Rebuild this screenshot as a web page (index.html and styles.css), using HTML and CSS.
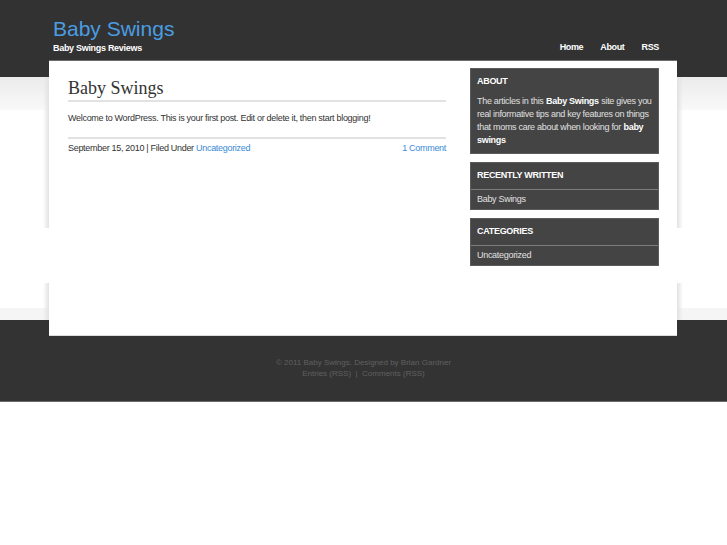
FILE: index.html
```html
<!DOCTYPE html>
<html lang="en">
<head>
<meta charset="utf-8">
<title>Baby Swings</title>
<link rel="stylesheet" href="styles.css">
</head>
<body>
<header class="header">
  <div class="header-inner">
    <div class="brand">
      <div class="site-title">Baby Swings</div>
      <div class="site-desc">Baby Swings Reviews</div>
    </div>
    <nav class="nav">
      <a href="#">Home</a>
      <a href="#">About</a>
      <a href="#">RSS</a>
    </nav>
  </div>
</header>
<div class="page">
  <div class="wrap">
    <main class="content">
      <h1 class="post-title">Baby Swings</h1>
      <p class="post-text">Welcome to WordPress. This is your first post. Edit or delete it, then start blogging!</p>
      <div class="post-meta">
        <span>September 15, 2010 | Filed Under <a href="#">Uncategorized</a></span>
        <a href="#">1 Comment</a>
      </div>
    </main>
    <aside class="sidebar">
      <section class="widget">
        <h2 class="widget-title">ABOUT</h2>
        <p class="widget-text">The articles in this<b>Baby Swings</b>site gives you real informative tips and key features on things that moms care about when looking for<b>baby swings</b></p>
      </section>
      <section class="widget">
        <h2 class="widget-title">RECENTLY WRITTEN</h2>
        <ul class="widget-list"><li>Baby Swings</li></ul>
      </section>
      <section class="widget">
        <h2 class="widget-title">CATEGORIES</h2>
        <ul class="widget-list"><li>Uncategorized</li></ul>
      </section>
    </aside>
  </div>
</div>
<footer class="footer">
  <p>© 2011 Baby Swings. Designed by Brian Gardner</p>
  <p>Entries (RSS) &nbsp;|&nbsp; Comments (RSS)</p>
</footer>
</body>
</html>
```
FILE: styles.css
```css
* { box-sizing: border-box; }
html, body { margin: 0; padding: 0; }
body {
  font-family: "Liberation Sans", Arial, sans-serif;
  color: #333;
  background:
    linear-gradient(#323232, #323232) 0 0 / 100% 77px no-repeat,
    linear-gradient(#ebebeb, #f2f2f2 50%, #f9f9f9) 0 77px / 100% 33px no-repeat,
    linear-gradient(#f5f5f5, #f5f5f5) 0 308px / 100% 12px no-repeat,
    #fff;
}
a { text-decoration: none; }

.header { height: 60px; }
.header-inner {
  width: 628px;
  margin-left: calc(50% - 314.5px);
  padding: 17px 18px 0 4px;
  display: flex;
  justify-content: space-between;
  align-items: flex-end;
}
.site-title {
  font-size: 21px;
  line-height: 24px;
  color: #4a9de2;
}
.site-desc {
  margin-top: 1px;
  font-size: 9px;
  line-height: 12px;
  font-weight: bold;
  color: #fff;
  letter-spacing: -0.3px;
}
.nav { display: flex; gap: 17px; margin-bottom: 1px; }
.nav a {
  font-size: 9px;
  line-height: 12px;
  font-weight: bold;
  color: #fff;
  letter-spacing: -0.35px;
}

.page {
  position: relative;
  z-index: 1;
  width: 640px;
  margin-left: calc(50% - 320.5px);
  padding: 0 6px;
  background:
    linear-gradient(to right, rgba(0,0,0,0), #e2e2e2) 0 17px / 6px 151px no-repeat,
    linear-gradient(to left, rgba(0,0,0,0), #e2e2e2) 100% 17px / 6px 151px no-repeat,
    linear-gradient(to right, rgba(0,0,0,0), #e2e2e2) 0 223px / 6px 37px no-repeat,
    linear-gradient(to left, rgba(0,0,0,0), #e2e2e2) 100% 223px / 6px 37px no-repeat;
}
.wrap {
  background: #fff;
  border-top: 1px solid #6c6c6c;
  border-bottom: 1px solid #ddd;
  min-height: 276px;
  display: flex;
  justify-content: space-between;
  padding: 0 18px 0 19px;
}

.content { width: 378px; padding-top: 16px; }
.post-title {
  margin: 0;
  font-family: "Liberation Serif", "Times New Roman", serif;
  font-weight: normal;
  font-size: 18px;
  line-height: 22px;
  color: #333;
  padding-bottom: 1px;
  border-bottom: 2px solid #e2e2e2;
}
.post-text {
  margin: 10px 0 0;
  font-size: 9px;
  line-height: 13px;
  letter-spacing: -0.3px;
  padding-bottom: 12px;
  border-bottom: 2px solid #e2e2e2;
}
.post-meta {
  display: flex;
  justify-content: space-between;
  padding-top: 3px;
  font-size: 9px;
  line-height: 13px;
  letter-spacing: -0.3px;
}
.post-meta a { color: #3a8bd8; }

.sidebar { width: 189px; padding-top: 7px; display: flex; flex-direction: column; gap: 8px; }
.widget {
  background: #444;
  border: 1px solid #5c5c5c;
  color: #e0e0e0;
}
.widget-title {
  margin: 0;
  padding: 6px 6px 7px;
  font-size: 9px;
  line-height: 13px;
  font-weight: bold;
  color: #fff;
  letter-spacing: -0.3px;
}
.widget-text {
  margin: 0;
  padding: 0 6px 6px;
  font-size: 9px;
  line-height: 13px;
  letter-spacing: -0.3px;
}
.widget-text b { color: #fff; margin: 0 2.5px; }
.widget-list { list-style: none; margin: 0; padding: 0; }
.widget-list li {
  border-top: 1px solid #7c7c7c;
  padding: 3px 6px 3px;
  font-size: 9px;
  line-height: 13px;
  letter-spacing: -0.3px;
}

.footer {
  margin-top: -16px;
  background: #333;
  border-bottom: 1px solid #6a6a6a;
  height: 82px;
  padding-top: 37px;
  text-align: center;
  color: #606060;
  font-size: 8px;
  line-height: 11px;
}
.footer p { margin: 0; }
```
